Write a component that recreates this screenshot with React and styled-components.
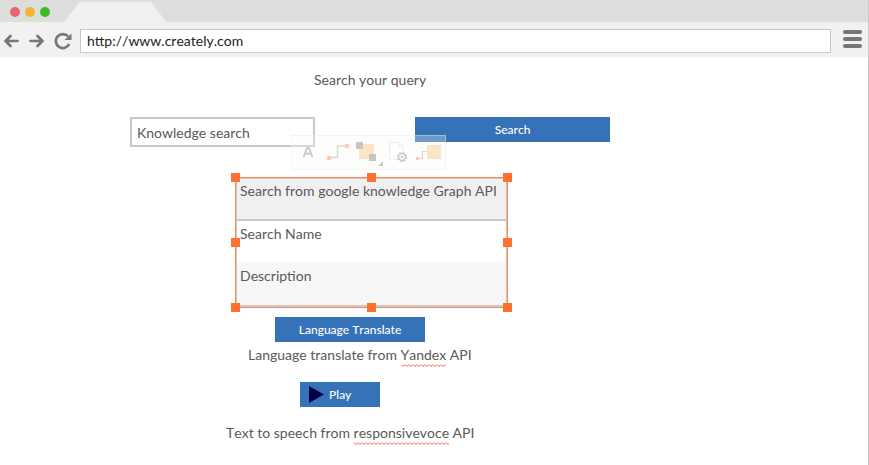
import React from 'react';
import styled, { createGlobalStyle } from 'styled-components';

const GlobalStyle = createGlobalStyle`
  * { box-sizing: border-box; }
  body { margin: 0; background: #fff; font-family: Lato, Carlito, sans-serif; font-kerning: none; overflow: hidden; }
  svg { display: block; flex: none; }
`;

const Window = styled.div`
  width: 869px;
  height: 465px;
  display: flex;
  flex-direction: column;
  border-right: 1px solid #c9c9c9;
  overflow: hidden;
`;
const TitleBar = styled.header`
  height: 22px;
  flex: none;
  display: flex;
  align-items: flex-end;
  background: #dcdedb;
`;
const Lights = styled.div`
  width: 64px;
  height: 22px;
  display: flex;
  gap: 6px;
  padding: 7px 0 0 10px;
`;
const Light = styled.span`
  width: 10px;
  height: 10px;
  margin-right: -1px;
  border-radius: 50%;
  background: ${(p) => p.$color};
`;
const Tab = styled.div`
  width: 102px;
  height: 20px;
  background: #f1f1f1;
  clip-path: polygon(15.5% 0, 85.5% 0, 100% 100%, 0 100%);
`;
const AddressRow = styled.nav`
  height: 35px;
  flex: none;
  display: flex;
  align-items: center;
  background: #f1f1f1;
`;
const Address = styled.div`
  width: 751px;
  height: 24px;
  margin-top: 2px;
  border: 1px solid #c9c9c9;
  background: #fff;
  padding-left: 6px;
  font-size: 14px;
  line-height: 22px;
  color: #222;
`;
const MenuButton = styled.div`
  display: flex;
  flex-direction: column;
  gap: 3px;
  margin: -1px 0 0 12px;
`;
const MenuLine = styled.span`
  width: 19px;
  height: 4px;
  border-radius: 2px;
  background: #777;
`;
const Page = styled.main`
  flex: 1;
  position: relative;
  display: flex;
  flex-direction: column;
  align-items: flex-start;
`;
const Label = styled.div`
  height: 20px;
  margin: ${(p) => p.$margin};
  font-size: 14px;
  line-height: 20px;
  color: #595959;
  white-space: nowrap;
`;
const Misspelled = styled.span`
  display: inline-block;
  height: 22px;
  background: url("data:image/svg+xml,%3Csvg xmlns='http://www.w3.org/2000/svg' width='4' height='3'%3E%3Cpath d='M0 .5L2 2.5L4 .5' fill='none' stroke='%23ff5555' stroke-width='1'/%3E%3C/svg%3E") repeat-x left bottom;
`;
const SearchRow = styled.div`
  display: flex;
  align-items: flex-start;
  gap: 100px;
  margin: 27px 0 0 130px;
`;
const Field = styled.div`
  width: 185px;
  height: 30px;
  border: 2px solid #c9c9c9;
  padding-left: 5px;
  font-size: 14px;
  line-height: 28px;
  color: #595959;
`;
const Button = styled.div`
  width: ${(p) => p.$width}px;
  height: 25px;
  margin: ${(p) => p.$margin || 0};
  display: flex;
  align-items: center;
  justify-content: ${(p) => (p.$start ? 'flex-start' : 'center')};
  gap: 5px;
  padding-left: ${(p) => (p.$start ? 9 : 0)}px;
  background: #3572b7;
  color: #fff;
  font-size: 12px;
  font-weight: 500;
  line-height: 25px;
`;
const Results = styled.div`
  position: relative;
  width: 273px;
  height: 131px;
  margin: 30px 0 0 235px;
  border: 1px solid #ff8552;
`;
const ResultList = styled.div`
  height: 129px;
  border: 1px solid #c9c9c9;
  border-bottom-width: 2px;
`;
const Result = styled.div`
  height: ${(p) => p.$height}px;
  padding: ${(p) => p.$top}px 0 0 3px;
  border-bottom: ${(p) => (p.$line ? '2px solid #c9c9c9' : 'none')};
  background: ${(p) => p.$bg};
  font-size: 14px;
  line-height: 20px;
  color: #595959;
  white-space: nowrap;
`;
const Handle = styled.span`
  position: absolute;
  left: ${(p) => p.$x}px;
  top: ${(p) => p.$y}px;
  width: 9px;
  height: 9px;
  background: #ff7031;
`;
const FloatingTools = styled.div`
  position: absolute;
  left: 291px;
  top: 78px;
  width: 155px;
  height: 35px;
  background: rgba(250, 250, 243, 0.3);
  border: 1px solid rgba(235, 233, 215, 0.4);
`;

const handles = [-5, 131, 267].flatMap((x) => [-5, 60, 125].map((y) => [x, y])).filter(([x, y]) => x !== 131 || y !== 60);

const Arrow = ({ flip }) => (
  <svg width="15" height="14" viewBox="0 0 15 14" transform={flip ? 'scale(-1,1)' : undefined}>
    <path d="M6.5 2L1.5 7L6.5 12M1.5 7H13.5" fill="none" stroke="#777" strokeWidth="2.7" strokeLinecap="round" strokeLinejoin="round" />
  </svg>
);
const NavIcons = styled.div`
  width: 80px;
  flex: none;
  display: flex;
  align-items: center;
  gap: 10px;
  padding: 3px 0 0 4px;
`;
const Reload = () => (
  <svg width="18" height="18" viewBox="0 0 18 18">
    <path d="M14.2 4.5A7 7 0 1 0 15.2 12" fill="none" stroke="#777" strokeWidth="2.7" />
    <path d="M17.5 1.5V8H10.5Z" fill="#777" />
  </svg>
);
const ToolIcons = () => (
  <svg width="153" height="33" viewBox="292 136 153 33">
    <path d="M303.6 157L307.3 147.7H308.8L312.5 157M305.2 153.8H310.9" fill="none" stroke="#c9cccd" strokeWidth="2" />
    <path d="M329 157.5H337.5V146H347" fill="none" stroke="#d5d7d9" strokeWidth="1.5" />
    <path d="M327 156h4v4h-4zM345 144h4v4h-4z" fill="#ffc9b5" />
    <path d="M359 144h15v15h-15z" fill="#fce4c7" />
    <path d="M356 142h7v7h-7zM369 154h7v7h-7z" fill="#c6c6c3" />
    <path d="M383 161v5h-5z" fill="#c9c9c9" />
    <path d="M389.5 142.5H399L403.5 147V159.5H389.5ZM399 142.5V147H403.5" fill="#fff" stroke="#ececea" />
    <circle cx="402" cy="157" r="4.4" fill="none" stroke="#c2c6c8" strokeWidth="1.5" strokeDasharray="1.73 1.726" />
    <circle cx="402" cy="157" r="3.3" fill="#fff" stroke="#c2c6c8" strokeWidth="1.2" />
    <circle cx="402" cy="157" r="1.3" fill="#c2c6c8" />
    <path d="M418 158.5H422.5V151.5H428" fill="none" stroke="#d5d7d9" strokeWidth="1.2" />
    <path d="M416 157h3v3h-3z" fill="#ffc9b5" />
    <path d="M427 145h14v14h-14z" fill="#fce4c7" />
  </svg>
);

export default function App() {
  return (
    <>
      <GlobalStyle />
      <Window>
        <TitleBar>
          <Lights>
            <Light $color="#ec6272" />
            <Light $color="#edb72f" />
            <Light $color="#3bbd20" />
          </Lights>
          <Tab />
        </TitleBar>
        <AddressRow>
          <NavIcons>
            <Arrow />
            <Arrow flip />
            <Reload />
          </NavIcons>
          <Address>http://www.creately.com</Address>
          <MenuButton>
            <MenuLine />
            <MenuLine />
            <MenuLine />
          </MenuButton>
        </AddressRow>
        <Page>
          <Label $margin="13px 0 0 314px">Search your query</Label>
          <SearchRow>
            <Field>Knowledge search</Field>
            <Button $width={195}>Search</Button>
          </SearchRow>
          <Results>
            <ResultList>
              <Result $height={42} $top={2} $bg="#f0f0f0" $line>Search from google knowledge Graph API</Result>
              <Result $height={41} $top={3} $bg="#fff">Search Name</Result>
              <Result $height={43} $top={4} $bg="#f7f7f7">Description</Result>
            </ResultList>
            {handles.map(([x, y]) => (
              <Handle key={`${x},${y}`} $x={x} $y={y} />
            ))}
          </Results>
          <Button $width={150} $margin="9px 0 0 275px">Language Translate</Button>
          <Label $margin="3px 0 0 248px">
            Language translate from <Misspelled>Yandex</Misspelled> API
          </Label>
          <Button $width={80} $margin="17px 0 0 300px" $start>
            <svg width="15" height="17" viewBox="0 0 15 17">
              <path d="M0 0L15 8.5L0 17Z" fill="#020145" />
            </svg>
            Play
          </Button>
          <Label $margin="16px 0 0 226px">
            Text to speech from <Misspelled>responsivevoce</Misspelled> API
          </Label>
          <FloatingTools>
            <ToolIcons />
          </FloatingTools>
        </Page>
      </Window>
    </>
  );
}
